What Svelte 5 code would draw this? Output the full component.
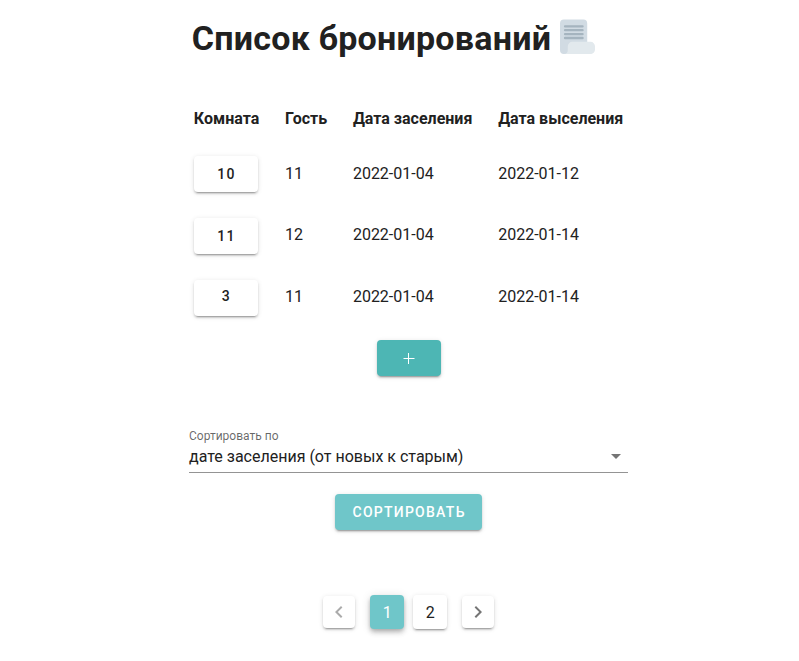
<script>
  const bookings = [
    { room: 10, guest: 11, from: '2022-01-04', to: '2022-01-12' },
    { room: 11, guest: 12, from: '2022-01-04', to: '2022-01-14' },
    { room: 3, guest: 11, from: '2022-01-04', to: '2022-01-14' }
  ];
  let page = $state(1);
</script>

<main>
  <h1>
    <span>Список бронирований</span>
    <svg class="scroll" viewBox="0 0 36 36" width="35" height="35" aria-hidden="true">
      <path fill="#d1dbe3" d="M4 0.500h20a4 4 0 0 1 4 4v22.500c0 5-4 9-9 9H4a4 4 0 0 1-4-4V4.500a4 4 0 0 1 4-4z" />
      <path fill="#e2e9ed" d="M31.500 23.500H12.500a4.500 4.500 0 0 0-4.500 4.500V32a4 4 0 0 1-4 4h27c3 0 5-2.200 5-5V28a4.500 4.500 0 0 0-4.500-4.500z" />
      <path stroke="#a5b4bf" stroke-width="2.400" stroke-linecap="round" d="M5.200 7.500h18M5.200 11.500h18M5.200 15.500h18M5.200 19.500h18" />
    </svg>
  </h1>

  <table>
    <thead>
      <tr><th>Комната</th><th>Гость</th><th>Дата заселения</th><th>Дата выселения</th></tr>
    </thead>
    <tbody>
      {#each bookings as b}
        <tr>
          <td class="action"><button class="btn room">{b.room}</button></td>
          <td>{b.guest}</td>
          <td>{b.from}</td>
          <td>{b.to}</td>
        </tr>
      {/each}
    </tbody>
  </table>

  <button class="btn add" aria-label="Добавить">
    <svg viewBox="0 0 12 12" width="12" height="12"><path d="M0.500 6.500h11M5.500 1v11" stroke="#fff" stroke-width="1" /></svg>
  </button>

  <div class="select">
    <div class="label">Сортировать по</div>
    <div class="value">
      <span>дате заселения (от новых к старым)</span>
      <svg viewBox="0 0 24 24" width="24" height="24"><path fill="#757575" d="M7 10l5 5 5-5z" /></svg>
    </div>
  </div>

  <button class="btn sort">Сортировать</button>

  <nav>
    <button class="nav prev" disabled={page === 1} aria-label="Назад" onclick={() => (page = 1)}>
      <svg viewBox="0 0 24 24" width="24" height="24"><path d="M15.410 16.580L10.830 12l4.580-4.590L14 6l-6 6 6 6z" /></svg>
    </button>
    {#each [1, 2] as n}
      <button class="item" class:active={page === n} onclick={() => (page = n)}>{n}</button>
    {/each}
    <button class="nav next" disabled={page === 2} aria-label="Вперёд" onclick={() => (page = 2)}>
      <svg viewBox="0 0 24 24" width="24" height="24"><path d="M8.590 16.580L13.170 12 8.590 7.410 10 6l6 6-6 6z" /></svg>
    </button>
  </nav>
</main>

<style>
  :global(body) {
    margin: 0;
    background: #fff;
  }
  main {
    box-sizing: border-box;
    width: 799px;
    height: 661px;
    padding: 12px 0 0 18px;
    display: flex;
    flex-direction: column;
    align-items: center;
    overflow: hidden;
    font: 16px/24px Roboto, sans-serif;
    color: #212121;
  }
  h1 {
    display: flex;
    align-items: center;
    gap: 9px;
    margin: 0 30px 0 0;
    height: 52px;
    font-size: 34px;
    line-height: 52px;
    font-weight: 700;
    letter-spacing: 0.25px;
    white-space: nowrap;
  }
  .scroll {
    position: relative;
    top: -2px;
  }
  table {
    height: 235.200px;
    margin-top: 29.600px;
    border-collapse: collapse;
  }
  th,
  td {
    padding: 12.900px;
    text-align: left;
    white-space: nowrap;
  }
  th {
    padding-top: 13.900px;
    padding-bottom: 11.900px;
  }
  td {
    height: 36px;
    padding-right: 12px;
    position: relative;
    top: -0.700px;
  }
  td.action {
    top: 0;
  }
  button {
    border: 0;
    padding: 0;
    display: flex;
    align-items: center;
    justify-content: center;
    font-family: inherit;
    color: inherit;
    background: #fff;
    border-radius: 4px;
  }
  .btn {
    height: 36px;
    min-width: 64px;
    font-size: 14px;
    font-weight: 500;
    letter-spacing: 1.25px;
    box-shadow:
      0 3px 1px -2px rgba(0, 0, 0, 0.2),
      0 2px 2px 0 rgba(0, 0, 0, 0.14),
      0 1px 5px 0 rgba(0, 0, 0, 0.12);
  }
  .room {
    padding: 0 0 1px 1.200px;
  }
  tr:last-child .room {
    padding-bottom: 3px;
  }
  .add {
    margin-top: 11.200px;
    background: #4db6b4;
  }
  .select {
    width: 439px;
    margin-top: 52px;
    border-bottom: 1px solid #949494;
  }
  .label {
    height: 16px;
    font-size: 12px;
    line-height: 16px;
    color: rgba(0, 0, 0, 0.6);
  }
  .value {
    height: 28px;
    display: flex;
    align-items: center;
    justify-content: space-between;
    line-height: 24px;
  }
  .value span {
    position: relative;
    top: -1px;
  }
  .value svg {
    position: relative;
    top: -2px;
  }
  .sort {
    width: 147px;
    margin-top: 21px;
    padding: 0 0 0 1.200px;
    letter-spacing: 1.250px;
    color: #fff;
    background: #6fc6c9;
    text-transform: uppercase;
  }
  nav {
    display: flex;
    align-items: center;
    margin-top: 65px;
  }
  .nav {
    width: 32px;
    height: 32px;
    box-shadow:
      0 3px 1px -2px rgba(0, 0, 0, 0.2),
      0 2px 2px 0 rgba(0, 0, 0, 0.14),
      0 1px 5px 0 rgba(0, 0, 0, 0.12);
  }
  .prev {
    margin-right: 10.500px;
  }
  .next {
    margin-left: 10px;
  }
  .nav svg {
    fill: #757575;
  }
  .nav:disabled svg {
    opacity: 0.6;
  }
  .item {
    width: 34px;
    height: 34px;
    margin: 0 4.500px;
    padding: 2px 0 0;
    font-size: 16px;
    box-shadow:
      0 3px 1px -2px rgba(0, 0, 0, 0.2),
      0 2px 2px 0 rgba(0, 0, 0, 0.14),
      0 1px 5px 0 rgba(0, 0, 0, 0.12);
  }
  .active {
    color: #fff;
    background: #6fc6c9;
    box-shadow:
      0 2px 4px -1px rgba(0, 0, 0, 0.2),
      0 4px 5px 0 rgba(0, 0, 0, 0.14),
      0 1px 10px 0 rgba(0, 0, 0, 0.12);
  }
</style>
